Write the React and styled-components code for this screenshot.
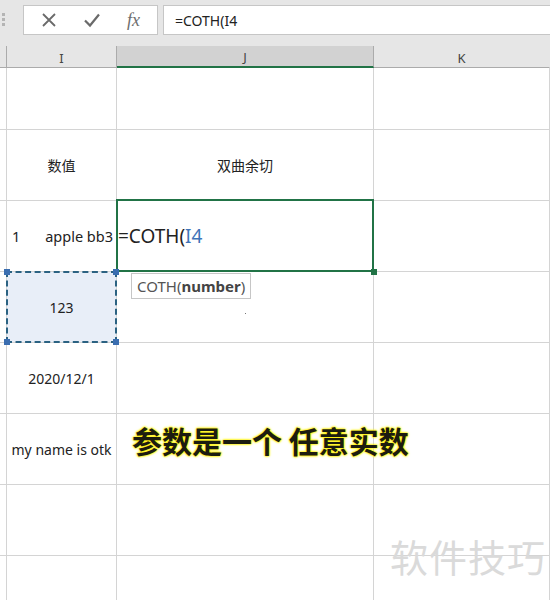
import styled, { createGlobalStyle } from "styled-components";

const Global = createGlobalStyle`
  html, body { margin: 0; padding: 0; background: #fff; }
  body {
    width: 550px;
    height: 600px;
    overflow: hidden;
    font-family: "Noto Sans", "Noto Sans CJK SC", sans-serif;
  }
`

const Page = styled.div`
  position: relative;
  width: 550px;
  height: 600px;
  overflow: hidden;
  background: #fff;
`

const Toolbar = styled.div`
  height: 46px;
  background: #e6e6e6;
  display: flex;
  align-items: flex-start;
  padding-top: 5px;
  box-sizing: border-box;
`
const Grip = styled.div`
  width: 23px;
  display: flex;
  flex-direction: column;
  gap: 2px;
  padding: 8px 0 0 2px;
  box-sizing: border-box;
  span {
    width: 3px;
    height: 3px;
    background: #b4b4b4;
  }
`
const Buttons = styled.div`
  width: 135px;
  height: 30px;
  box-sizing: border-box;
  background: #fff;
  border: 1px solid #c6c6c6;
  display: flex;
  align-items: center;
  justify-content: space-around;
  padding: 0 4px;
  color: #666;
`
const Fx = styled.span`
  font-family: "Liberation Serif", serif;
  font-style: italic;
  font-size: 18px;
  color: #6e6e6e;
`
const FormulaInput = styled.div`
  flex: 1;
  height: 30px;
  margin-left: 5px;
  box-sizing: border-box;
  background: #fff;
  border: 1px solid #c6c6c6;
  border-right: none;
  padding-left: 11px;
  display: flex;
  align-items: center;
  font-size: 14px;
  color: #222;
`

const Sheet = styled.div`
  display: grid;
  grid-template-columns: 7px 110px 257px 1fr;
  grid-template-rows: 22px 62px repeat(6, 71px) 60px;
`
const Head = styled.div`
  box-sizing: border-box;
  background: ${p => (p.$sel ? "#d2d2d2" : "#e6e6e6")};
  border-right: 1px solid ${p => (p.$last ? "transparent" : "#ababab")};
  border-bottom: ${p => (p.$sel ? "2px solid #217346" : "1px solid #ababab")};
  display: flex;
  align-items: center;
  justify-content: center;
  font-size: 13px;
  color: #444;
  padding-top: 2px;
`
const Cell = styled.div`
  position: relative;
  box-sizing: border-box;
  border-right: 1px solid #d4d4d4;
  border-bottom: 1px solid #d4d4d4;
  display: flex;
  align-items: center;
  justify-content: ${p => p.$align || "center"};
  font-size: 14px;
  color: #222;
  white-space: nowrap;
  background: ${p => (p.$copy ? "#e8eef8" : "#fff")};
`
const Strip = styled(Cell)``

const Active = styled(Cell)`
  overflow: visible;
  padding-left: 1px;
  font-size: 19px;
  color: #222;
  &::after {
    content: "";
    position: absolute;
    left: -1px;
    top: -2px;
    right: -1px;
    bottom: -1px;
    border: 2px solid #217346;
  }
`
const Handle = styled.span`
  position: absolute;
  width: 6px;
  height: 6px;
  background: ${p => p.$c || "#217346"};
  z-index: 3;
  ${p => p.$pos}
`
const Marquee = styled.span`
  position: absolute;
  left: -1px;
  top: -1px;
  right: -1px;
  bottom: -1px;
  border: 2px dashed #2b6282;
`
const Ref = styled.span`
  color: #3f74b8;
`
const Hint = styled.div`
  position: absolute;
  left: 131px;
  top: 273px;
  height: 26px;
  padding: 0 5px;
  box-sizing: border-box;
  background: #fff;
  border: 1px solid #c6c6c6;
  display: flex;
  align-items: center;
  font-size: 15px;
  color: #555;
  z-index: 4;
  b { color: #444; }
`
const Dot = styled.span`
  position: absolute;
  left: 245px;
  top: 313px;
  width: 1px;
  height: 1px;
  background: #777;
`
const Caption = styled.div`
  position: absolute;
  left: 132px;
  top: 418px;
  font-family: "Noto Sans CJK SC", sans-serif;
  font-weight: 700;
  font-size: 30px;
  color: #1c1c10;
  white-space: pre;
  text-shadow: 0 0 2px #fff200, 0 0 2px #fff200, 0 0 3px #fff200;
`
const Watermark = styled.div`
  position: absolute;
  left: 390px;
  top: 528px;
  font-family: "Noto Sans CJK SC", sans-serif;
  font-size: 38px;
  color: #dadada;
  letter-spacing: 1px;
`

const Split = styled.div`
  width: 100%;
  display: flex;
  justify-content: space-between;
  padding: 0 3px 0 5px;
  box-sizing: border-box;
  font-size: 14.5px;
`

const rows = [
  ["", ""],
  ["数值", "双曲余切"],
  null,
  null,
  ["2020/12/1", ""],
  ["my name is otk", ""],
  ["", ""],
  ["", ""],
]

const App = () => {
  return (
    <Page>
      <Global />
      <Toolbar>
        <Grip><span /><span /><span /></Grip>
        <Buttons>
          <svg width="16" height="16" viewBox="0 0 16 16">
            <path d="M2 2 L14 14 M14 2 L2 14" stroke="#6a6a6a" strokeWidth="1.8" fill="none" />
          </svg>
          <svg width="18" height="16" viewBox="0 0 18 16">
            <path d="M2 8.5 L7 13.5 L16 2.5" stroke="#6a6a6a" strokeWidth="2.2" fill="none" />
          </svg>
          <Fx>fx</Fx>
        </Buttons>
        <FormulaInput>=COTH(I4</FormulaInput>
      </Toolbar>
      <Sheet>
        <Head />
        <Head>I</Head>
        <Head $sel>J</Head>
        <Head $last>K</Head>

        {rows.map((r, i) => {
          if (i === 2) {
            return [
              <Strip key="s2" />,
              <Cell key="a2">
                <Split><span>1</span><span>apple bb3</span></Split>
              </Cell>,
              <Active key="b2" $align="flex-start">
                =COTH(<Ref>I4</Ref>
                <Handle $pos="right:-4px;bottom:-4px;" />
              </Active>,
              <Cell key="c2" />,
            ];
          }
          if (i === 3) {
            return [
              <Strip key="s3" />,
              <Cell key="a3" $copy>
                123
                <Marquee />
                <Handle $c="#3b6eb0" $pos="left:-3px;top:-3px;" />
                <Handle $c="#3b6eb0" $pos="right:-3px;top:-3px;" />
                <Handle $c="#3b6eb0" $pos="left:-3px;bottom:-3px;" />
                <Handle $c="#3b6eb0" $pos="right:-3px;bottom:-3px;" />
              </Cell>,
              <Cell key="b3" />,
              <Cell key="c3" />,
            ];
          }
          return [
            <Strip key={"s" + i} />,
            <Cell key={"a" + i}>{r[0]}</Cell>,
            <Cell key={"b" + i}>{r[1]}</Cell>,
            <Cell key={"c" + i} />,
          ];
        })}
      </Sheet>
      <Hint>COTH(<b>number</b>)</Hint>
      <Dot />
      <Caption>参数是一个 任意实数</Caption>
      <Watermark>软件技巧</Watermark>
    </Page>
  );
};

export default App;
